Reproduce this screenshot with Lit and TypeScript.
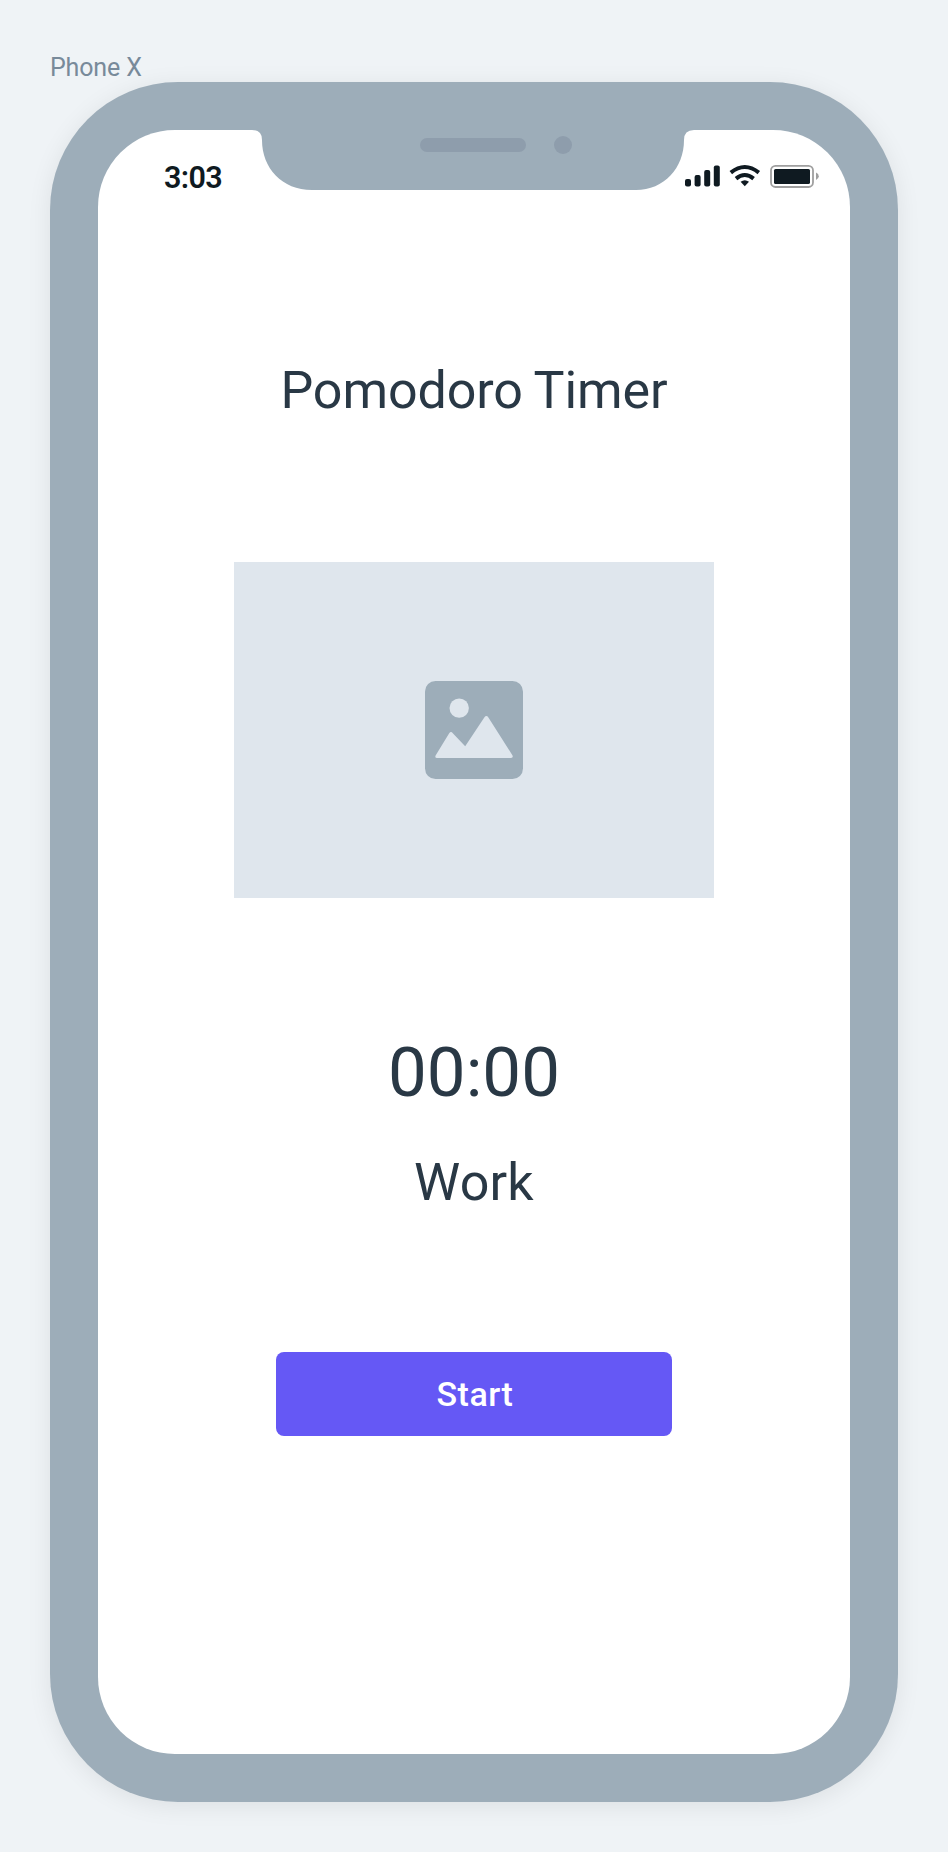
import { LitElement, html, css } from "lit";
import { customElement, property } from "lit/decorators.js";

@customElement("status-bar")
class StatusBar extends LitElement {
  @property() time = "";

  static styles = css`
    :host { display: flex; justify-content: space-between; align-items: center; height: 94px; padding: 0 30px 0 66px; box-sizing: border-box; }
    .time { font-size: 30.5px; line-height: 36px; font-weight: 600; letter-spacing: -0.6px; color: #0f1a21; margin-top: 2px; }
    .icons { display: block; margin-top: -2px; }
  `;

  render() {
    return html`
      <span class="time">${this.time}</span>
      <svg class="icons" width="136" height="24" viewBox="684 164 136 24" fill="#0f1a21">
        <rect x="685" y="179" width="6" height="7.6" rx="2" />
        <rect x="694.6" y="175" width="6" height="11.6" rx="2" />
        <rect x="704.2" y="170" width="6" height="16.6" rx="2" />
        <rect x="713.8" y="165.4" width="6" height="21.2" rx="2" />
        <g fill="none" stroke="#0f1a21" stroke-width="4">
          <path d="M730.8 172.6 Q744.8 161.4 758.8 172.6" />
          <path d="M736 178.6 Q744.8 171.4 753.6 178.6" />
        </g>
        <path d="M740.6 181.8 Q744.8 178.8 749 181.8 L744.8 186.2 Z" />
        <rect x="771" y="165.8" width="42" height="21.2" rx="4.5" fill="none" stroke="#9f9f9f" stroke-width="1.8" />
        <rect x="774" y="169" width="36" height="15" rx="1.6" />
        <path d="M816 172.4 Q818.8 173.6 818.8 176.2 Q818.8 178.8 816 180 Z" fill="#9f9f9f" />
      </svg>
    `;
  }
}

@customElement("image-placeholder")
class ImagePlaceholder extends LitElement {
  static styles = css`
    :host { display: flex; align-items: center; justify-content: center; width: 480px; height: 336px; background: #dfe6ed; }
  `;

  render() {
    return html`
      <svg width="98" height="98" viewBox="0 0 98 98">
        <rect width="98" height="98" rx="10.5" fill="#9dadb9" />
        <g fill="#dfe6ed">
          <circle cx="34.2" cy="27.1" r="9.7" />
          <path d="M10.6 74.5 L24.2 52.2 Q26 49.8 27.8 52.2 L40.2 65.3 L59.3 36.4 Q61.4 33.6 63.4 36.4 L87.4 74.2 Q88.6 76.8 86 77 L12 77 Q9.6 76.8 10.6 74.5 Z" />
        </g>
      </svg>
    `;
  }
}

@customElement("phone-frame")
class PhoneFrame extends LitElement {
  static styles = css`
    :host { display: block; position: relative; box-sizing: border-box; width: 848px; height: 1720px; padding: 48px; border-radius: 128px; background: #9dadb9; box-shadow: 0 4px 24px rgba(0, 0, 0, 0.08); }
    .screen { height: 1624px; border-radius: 77px; background: #fff; overflow: hidden; }
    .notch { position: absolute; left: 202px; top: 47px; }
  `;

  render() {
    return html`
      <div class="screen"><slot></slot></div>
      <svg class="notch" width="444" height="62" viewBox="252 129 444 62">
        <path fill="#9dadb9" d="M252 129 V130 Q262 130 262 140 C262 168 282 190 312 190 H636 C664 190 684 168 684 140 Q684 130 694 130 V129 Z" />
        <rect x="420" y="138" width="106" height="14" rx="7" fill="#8e9dac" />
        <circle cx="563" cy="145" r="9" fill="#8e9dac" />
      </svg>
    `;
  }
}

@customElement("app-root")
class AppRoot extends LitElement {
  static styles = css`
    :host { display: block; box-sizing: border-box; height: 1852px; padding: 50px 50px 0; background: #eff3f6; font-family: Roboto, "Liberation Sans", sans-serif; color: #293845; overflow: hidden; }
    .label { height: 32px; line-height: 35px; font-size: 25px; font-weight: 450; letter-spacing: -0.15px; color: #788a9a; }
    .content { display: flex; flex-direction: column; align-items: center; }
    .title { margin: 137px 0 0; font-size: 52px; line-height: 60px; font-weight: 400; letter-spacing: -0.1px; word-spacing: -1px; }
    image-placeholder { margin-top: 141px; }
    .clock { margin-top: 135px; font-size: 69px; line-height: 80px; }
    .mode { margin-top: 40px; font-size: 52px; line-height: 60px; letter-spacing: 0.2px; }
    .start { margin-top: 139px; width: 396px; height: 84px; border: 0; padding: 0 0 0 2px; border-radius: 8px; background: #6558f5; color: #fff; font: 500 34px/84px Roboto, "Liberation Sans", sans-serif; letter-spacing: 0.5px; }
  `;

  render() {
    return html`
      <div class="label">Phone X</div>
      <phone-frame>
        <status-bar time="3:03"></status-bar>
        <div class="content">
          <h1 class="title">Pomodoro Timer</h1>
          <image-placeholder></image-placeholder>
          <div class="clock">00:00</div>
          <div class="mode">Work</div>
          <button class="start">Start</button>
        </div>
      </phone-frame>
    `;
  }
}
